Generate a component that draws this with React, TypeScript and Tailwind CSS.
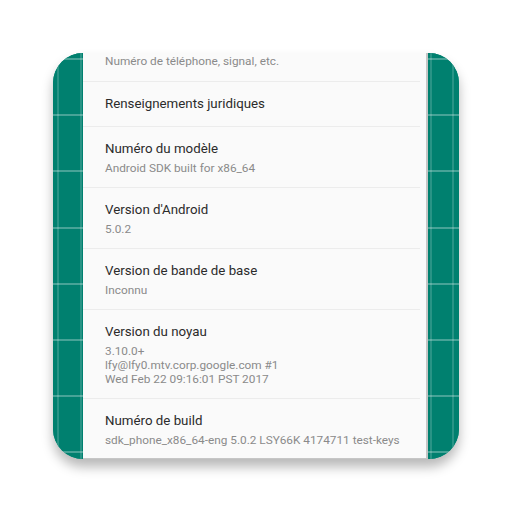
import React from "react";

const TEAL = "#00806f";

function Strip({ width, xs }: { width: number; xs: number[] }) {
  const ys = [6, 62, 118, 175, 231, 287, 343, 399];
  return (
    <div className="h-full shrink-0 bg-[#00806f]" style={{ width }}>
      <svg width={width} height={406} viewBox={`0 0 ${width} 406`} className="block">
        <rect width={width} height={406} fill={TEAL} />
        {ys.map((y) => (
          <rect key={y} x={0} y={y - 1} width={width} height={2} fill="#ffffff" opacity={0.28} />
        ))}
        {xs.map((x) => (
          <rect key={x} x={x - 1} y={0} width={2} height={406} fill="#ffffff" opacity={0.16} />
        ))}
      </svg>
    </div>
  );
}

type Row = { title?: string; lines: string[]; h: string; pt: string; last?: boolean };

const rows: Row[] = [
  { lines: ["Numéro de téléphone, signal, etc."], h: "h-[29px]", pt: "pt-[1px]" },
  { title: "Renseignements juridiques", lines: [], h: "h-[45px]", pt: "pt-[13px]" },
  { title: "Numéro du modèle", lines: ["Android SDK built for x86_64"], h: "h-[61px]", pt: "pt-[13px]" },
  { title: "Version d'Android", lines: ["5.0.2"], h: "h-[61px]", pt: "pt-[13px]" },
  { title: "Version de bande de base", lines: ["Inconnu"], h: "h-[61px]", pt: "pt-[13px]" },
  {
    title: "Version du noyau",
    lines: ["3.10.0+", "lfy@lfy0.mtv.corp.google.com #1", "Wed Feb 22 09:16:01 PST 2017"],
    h: "h-[89px]",
    pt: "pt-[13px]",
  },
  {
    title: "Numéro de build",
    lines: ["sdk_phone_x86_64-eng 5.0.2 LSY66K 4174711 test-keys"],
    h: "flex-1",
    pt: "pt-[13px]",
    last: true,
  },
];

export default function App() {
  return (
    <div className="w-[512px] h-[512px] bg-white pt-[53px] pl-[53px] font-['Roboto',sans-serif]">
      <div className="w-[406px] h-[406px] rounded-[30px] overflow-hidden flex shadow-[0_8px_12px_rgba(0,0,0,0.28)]">
        <Strip width={30} xs={[5, 28]} />
        <div className="flex-1 h-full flex flex-col bg-[#fafafa] border-r-2 border-b-[1.5px] border-[#c6c6c6]">
          {rows.map((r, i) => (
            <div
              key={i}
              className={`${r.h} ${r.pt} pl-[22px] mr-[6px] shrink-0 ${r.last ? "" : "border-b border-[#ececec]"}`}
            >
              {r.title && (
                <div className="text-[13.3px] leading-[18px] text-[#2b2b2b]">{r.title}</div>
              )}
              {r.lines.length > 0 && (
                <div className={r.title ? "mt-[3px]" : ""}>
                  {r.lines.map((l) => (
                    <div key={l} className="text-[11.8px] leading-[14px] text-[#8a8a8a]">
                      {l}
                    </div>
                  ))}
                </div>
              )}
            </div>
          ))}
        </div>
        <Strip width={31} xs={[3, 25]} />
      </div>
    </div>
  );
}
